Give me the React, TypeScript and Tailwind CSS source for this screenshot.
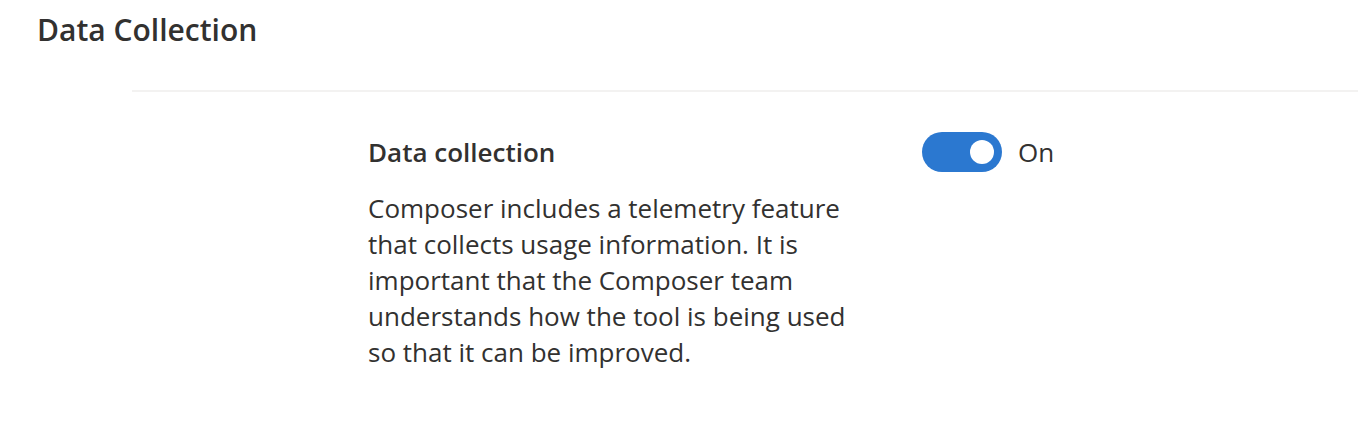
export default function App() {
  return (
    <div
      className="w-[1358px] h-[430px] bg-white text-[#323130]"
      style={{ fontFamily: '"Open Sans", "Noto Sans", sans-serif' }}
    >
      <h1 className="pl-[37px] pt-[12px] text-[30px] leading-[36px] font-semibold">Data Collection</h1>
      <div className="ml-[132px] mt-[42px] border-t-2 border-[#f3f2f1]">
        <div className="flex pl-[236px] pt-[40px]">
          <div className="w-[554px]">
            <h2 className="text-[26px] leading-[40px] font-semibold">Data collection</h2>
            <p className="mt-[18px] text-[26px] leading-[36px] w-[490px]">
              Composer includes a telemetry feature that collects usage information. It is important that the
              Composer team understands how the tool is being used so that it can be improved.
            </p>
          </div>
          <div className="flex items-center gap-4 h-[40px]">
            <button className="w-[80px] h-[40px] rounded-full bg-[#2b78d0] flex items-center justify-end pr-[8px]">
              <span className="w-[24px] h-[24px] rounded-full bg-white" />
            </button>
            <span className="text-[26px] leading-[32px]">On</span>
          </div>
        </div>
      </div>
    </div>
  );
}
